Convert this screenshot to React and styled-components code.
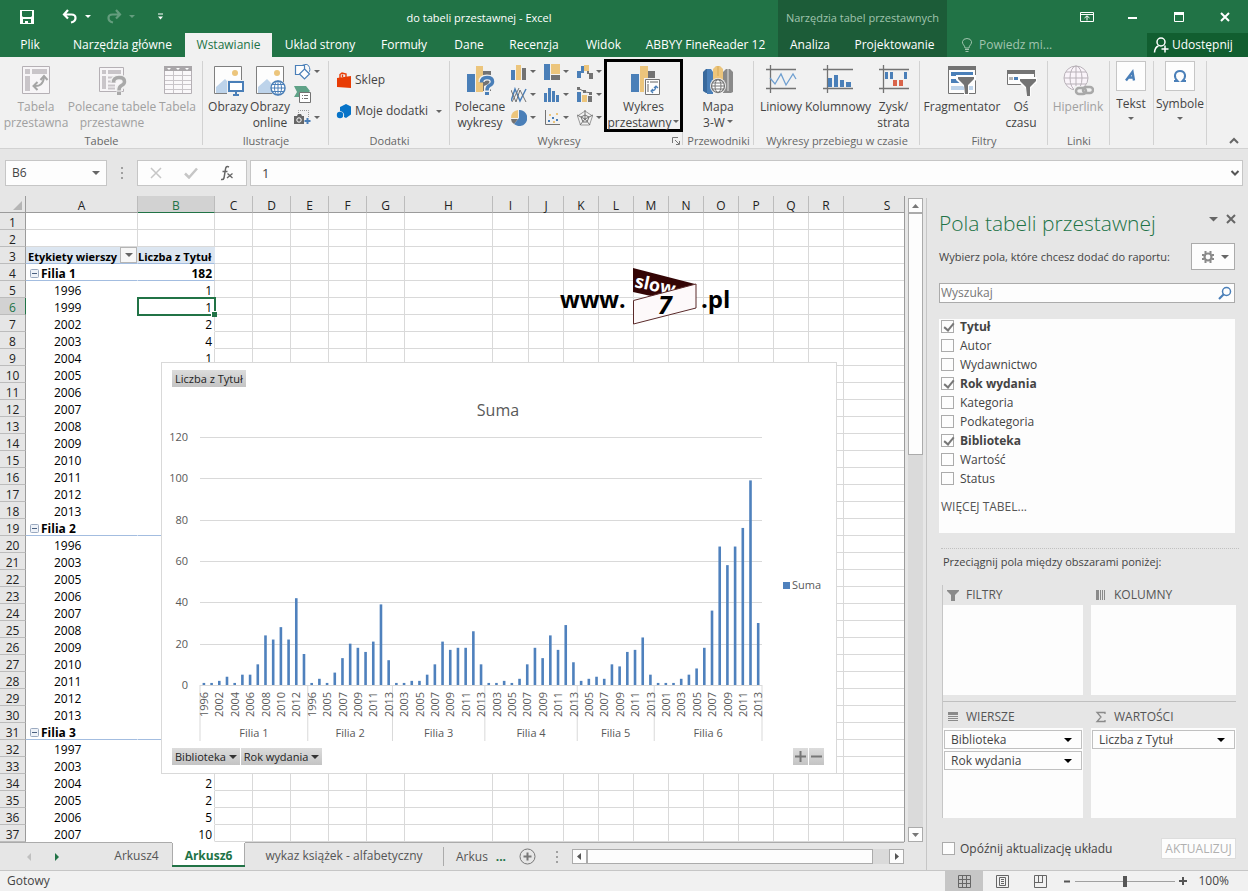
import React, { useState } from "react";
import styled, { createGlobalStyle, css } from "styled-components";

const GlobalStyle = createGlobalStyle`
  * {
    box-sizing: border-box;
  }
  body {
    margin: 0;
    background: #e6e6e6;
    font-family: "Open Sans", "Noto Sans", sans-serif;
    font-size: 12px;
    line-height: 16px;
    color: #444444;
  }
  button, input {
    font: inherit;
    color: inherit;
    margin: 0;
    padding: 0;
    border: 0;
    background: none;
    border-radius: 0;
  }
  svg {
    display: block;
    flex: none;
  }
`;

const Window = styled.div`
  display: flex;
  flex-direction: column;
  min-height: 100vh;
  overflow: hidden;
`;

/* ---------- title bar and tabs ---------- */

const Header = styled.header`
  display: flex;
  background: #217346;
  color: #ffffff;
`;

const HeaderMain = styled.div`
  width: 778px;
`;

const TitleRow = styled.div`
  display: flex;
  align-items: center;
  height: 33px;
`;

const QuickAccess = styled.div`
  display: flex;
  align-items: center;
  width: 180px;
  padding-left: 19px;
`;

const QuickButton = styled.button`
  width: ${(props) => props.$w}px;
  height: 30px;
  opacity: ${(props) => (props.disabled ? 0.3 : 1)};
  color: #ffffff;
`;

const WindowTitle = styled.div`
  flex: 1;
  text-align: center;
  padding-top: 3px;
  font-size: 11px;
`;

const TabRow = styled.nav`
  display: flex;
  height: 24px;
`;

const Tab = styled.button`
  width: ${(props) => props.$w}px;
  height: 24px;
  white-space: nowrap;
  background: ${(props) => (props.$active ? "#f1f1f1" : "transparent")};
  color: ${(props) => (props.$active ? "#217346" : "#ffffff")};
`;

const Context = styled.div`
  width: 169px;
  background: #1c5c38;
`;

const ContextTitle = styled(TitleRow)`
  justify-content: center;
  padding-top: 3px;
  font-size: 11px;
  white-space: nowrap;
  color: #a0c4ae;
`;

const HeaderEnd = styled.div`
  flex: 1;
`;

const WindowButtons = styled(TitleRow)`
  justify-content: flex-end;
`;

const WindowButton = styled.button`
  display: flex;
  align-items: center;
  justify-content: center;
  width: 46px;
  height: 30px;
`;

const TellRow = styled(TabRow)`
  justify-content: space-between;
`;

const Tell = styled.button`
  display: flex;
  align-items: center;
  gap: 6px;
  padding-left: 14px;
  color: #a0c4ae;
`;

const Share = styled.button`
  display: flex;
  align-items: center;
  gap: 3px;
  width: 101px;
  padding-left: 6px;
  background: #115e30;
  color: #ffffff;
`;

/* ---------- ribbon ---------- */

const RibbonBar = styled.div`
  display: flex;
  position: relative;
  height: 92px;
  background: #f1f1f1;
  border-bottom: 1px solid #d2d2d2;
`;

const GroupBox = styled.section`
  display: flex;
  flex-direction: column;
  justify-content: space-between;
  position: relative;
  width: ${(props) => props.$w}px;
  &::after {
    content: "";
    position: absolute;
    right: 0;
    top: 4px;
    bottom: 3px;
    width: 1px;
    background: #d2d2d2;
  }
`;

const GroupBody = styled.div`
  display: flex;
  padding-left: ${(props) => props.$left || 4}px;
`;

const GroupLabel = styled.div`
  height: 14px;
  padding-right: ${(props) => (props.$launcher ? 15 : 0)}px;
  font-size: 11px;
  line-height: 14px;
  text-align: center;
  white-space: nowrap;
  color: #666666;
`;

const BigButton = styled.button`
  display: flex;
  flex: none;
  flex-direction: column;
  align-items: center;
  width: ${(props) => props.$w}px;
  height: 73px;
  margin-top: 2px;
  padding-top: 5px;
  white-space: nowrap;
  position: relative;
  z-index: 1;
  color: #444444;
  svg {
    margin-bottom: 2px;
  }
  ${(props) =>
    props.disabled &&
    css`
      color: #a0a0a0;
    `}
  ${(props) =>
    props.$marked &&
    css`
      border: 3px solid #000000;
      padding-top: 2px;
    `}
`;

const LabelLine = styled.span`
  display: flex;
  align-items: center;
  gap: 2px;
  height: 16px;
  padding-top: 1px;
`;

const TallButton = styled.button`
  display: flex;
  flex-direction: column;
  align-items: center;
  width: ${(props) => props.$w}px;
  margin-top: 4px;
  gap: 5px;
`;

const Tile = styled.span`
  display: flex;
  align-items: center;
  justify-content: center;
  width: 30px;
  height: 30px;
  background: #fdfdfd;
  border: 1px solid #c6c6c6;
`;

const SmallGrid = styled.div`
  display: grid;
  grid-template-columns: ${(props) => (props.$wide ? "33px 33px 27px" : "27px")};
  grid-auto-rows: 23px;
  padding-top: 3px;
  padding-left: 3px;
`;

const SmallButton = styled.button`
  display: flex;
  align-items: center;
  gap: 3px;
`;

const StoreList = styled.div`
  display: flex;
  flex-direction: column;
  gap: 15px;
  width: 106px;
  padding-top: 15px;
`;

const StoreButton = styled.button`
  display: flex;
  align-items: center;
  gap: 3px;
  height: 16px;
  white-space: nowrap;
`;

const Push = styled.span`
  margin-left: auto;
`;

const Launcher = styled.button`
  position: absolute;
  right: 3px;
  bottom: 3px;
`;

const Collapse = styled.button`
  position: absolute;
  right: 9px;
  bottom: 3px;
`;

/* ---------- formula bar ---------- */

const FormulaBar = styled.div`
  display: flex;
  align-items: center;
  padding: 11px 5px 10px;
`;

const Box = styled.div`
  display: flex;
  align-items: center;
  height: 26px;
  background: #fdfdfd;
  border: 1px solid #c6c6c6;
`;

const NameBox = styled(Box)`
  width: 102px;
  padding: 0 6px;
  input {
    width: 80px;
  }
`;

const Dots = styled.div`
  width: 2px;
  height: 12px;
  margin: 0 14px 0 ${(props) => props.$before || 14}px;
  background: repeating-linear-gradient(#a0a0a0 0 2px, transparent 2px 5px);
`;

const FxBox = styled(Box)`
  justify-content: space-between;
  width: 110px;
  padding: 0 12px;
`;

const FormulaBox = styled(Box)`
  flex: 1;
  margin-left: 3px;
  padding: 0 2px 0 11px;
  font-size: 13px;
  input {
    flex: 1;
    min-width: 0;
  }
`;

/* ---------- sheet ---------- */

const Work = styled.main`
  display: flex;
  flex: 1;
`;

const SheetColumn = styled.div`
  display: flex;
  flex-direction: column;
  flex: 1;
  min-width: 0;
`;

const SheetArea = styled.div`
  display: flex;
`;

const Viewport = styled.div`
  position: relative;
  flex: 1;
  min-width: 0;
  overflow: hidden;
  border-right: 1px solid #9b9b9b;
`;

const Grid = styled.table`
  table-layout: fixed;
  width: 931px;
  border-collapse: separate;
  border-spacing: 0;
  background: #ffffff;
  color: #000000;
`;

const ColHead = styled.th`
  height: 17px;
  padding: 3px 0 0;
  font-weight: 400;
  line-height: 13px;
  background: ${(props) => (props.$active ? "#d2d2d2" : "#e6e6e6")};
  color: ${(props) => (props.$active ? "#217346" : "#222222")};
  border-right: 1px solid #bcbcbc;
  border-bottom: 1px solid ${(props) => (props.$active ? "#217346" : "#9b9b9b")};
`;

const RowHead = styled.th`
  height: 17px;
  padding: 3px 0 0;
  font-weight: 400;
  line-height: 13px;
  background: ${(props) => (props.$active ? "#d2d2d2" : "#e6e6e6")};
  color: ${(props) => (props.$active ? "#217346" : "#222222")};
  border-right: 1px solid ${(props) => (props.$active ? "#217346" : "#9b9b9b")};
  border-bottom: 1px solid #bcbcbc;
`;

const Corner = styled(RowHead)`
  border-bottom-color: #9b9b9b;
  svg {
    margin: 0 3px 0 auto;
  }
`;

const Cell = styled.td`
  position: relative;
  height: 17px;
  padding: 3px 0 0;
  line-height: 13px;
  white-space: nowrap;
  border-right: 1px solid #d9d9d9;
  border-bottom: 1px solid #d9d9d9;
`;

const kinds = {
  head: css`
    font-weight: 700;
    font-size: 11px;
    background: #dce6f1;
    border-right-color: #dce6f1;
    border-bottom-color: #a3bde0;
  `,
  total: css`
    font-weight: 700;
    border-bottom-color: #a3bde0;
  `,
  year: css`
    border-bottom-color: transparent;
  `,
};

const LabelCell = styled(Cell)`
  padding-left: ${(props) => (props.$kind === "year" ? 28 : props.$kind === "head" ? 2 : 4)}px;
  ${(props) => kinds[props.$kind]}
  ${(props) => props.$kind && "border-right-color: transparent;"}
`;

const ValueCell = styled(Cell)`
  padding-right: ${(props) => (props.$kind === "head" ? 3 : 2)}px;
  text-align: right;
  ${(props) => kinds[props.$kind]}
  ${(props) =>
    props.$selected &&
    css`
      outline: 2px solid #217346;
      outline-offset: -1px;
    `}
`;

const Inline = styled.span`
  display: flex;
  align-items: center;
  gap: 2px;
`;

const FilterButton = styled.button`
  display: flex;
  align-items: center;
  justify-content: center;
  position: absolute;
  right: 0;
  top: 0;
  width: 17px;
  height: 16px;
  background: #f7f7f7;
  border: 1px solid #b5b5b5;
`;

const FillHandle = styled.span`
  position: absolute;
  right: -3px;
  bottom: -3px;
  width: 6px;
  height: 6px;
  background: #217346;
  border: 1px solid #ffffff;
  border-width: 1px 0 0 1px;
  z-index: 1;
`;

const Watermark = styled.div`
  position: absolute;
  left: 559px;
  top: 70px;
`;

const VScroll = styled.div`
  display: flex;
  flex-direction: column;
  width: 15px;
  margin: 2px 3px 0;
  background: #dadada;
`;

const ScrollButton = styled.button`
  display: flex;
  align-items: center;
  justify-content: center;
  width: 15px;
  height: 15px;
  background: #fdfdfd;
  border: 1px solid #ababab;
`;

const VThumb = styled.div`
  height: 242px;
  background: #fdfdfd;
  border: 1px solid #ababab;
`;

const Spacer = styled.div`
  flex: 1;
`;

/* ---------- pivot chart ---------- */

const ChartBox = styled.figure`
  display: flex;
  flex-direction: column;
  position: absolute;
  left: 161px;
  top: 166px;
  width: 676px;
  margin: 0;
  background: #ffffff;
  border: 1px solid #d9d9d9;
`;

const ChartRow = styled.div`
  display: flex;
  gap: 1px;
  padding: 7px 12px 8px 10px;
`;

const FieldButton = styled.button`
  display: flex;
  align-items: center;
  gap: 3px;
  height: 17px;
  padding: 0 3px;
  font-size: 11px;
  white-space: nowrap;
  color: #222222;
  background: linear-gradient(#dcdcdc, #c4c4c4);
`;

const ZoomButton = styled(FieldButton)`
  justify-content: center;
  width: 15px;
  padding: 0;
`;

/* ---------- sheet tabs ---------- */

const SheetBar = styled.div`
  display: flex;
  align-items: stretch;
  height: 28px;
  padding-right: 22px;
`;

const SheetNav = styled.div`
  display: flex;
  align-items: center;
  gap: 24px;
  width: 101px;
  padding-left: 26px;
  border-top: 1px solid #ababab;
`;

const SheetTab = styled.button`
  width: ${(props) => props.$w}px;
  height: 25px;
  padding-top: 2px;
  white-space: nowrap;
  border-top: 1px solid #ababab;
  ${(props) =>
    props.$active
      ? css`
          padding-top: 4px;
          font-weight: 700;
          color: #217346;
          background: #ffffff;
          border-top-color: #ffffff;
          border-bottom: 2px solid #217346;
          box-shadow: inset 1px 0 #ababab, inset -1px 0 #ababab;
        `
      : css`
          color: #555555;
        `}
`;

const SheetBarLine = styled.div`
  display: flex;
  align-items: center;
  flex: 1;
  border-top: 1px solid #ababab;
`;

const TabDivider = styled.span`
  width: 1px;
  height: 19px;
  background: #ababab;
`;

const CutName = styled.button`
  margin-left: 12px;
  color: #555555;
`;

const MoreTabs = styled.button`
  width: 14px;
  margin: 0 11px 0 6px;
  font-weight: 700;
  color: #217346;
`;

const HScroll = styled.div`
  display: flex;
  flex: 1;
  background: #dadada;
`;

const HThumb = styled.div`
  flex: 1;
  margin-right: 16px;
  background: #fdfdfd;
  border: 1px solid #ababab;
`;

/* ---------- field pane ---------- */

const Pane = styled.aside`
  display: flex;
  flex-direction: column;
  width: 322px;
  margin-top: 2px;
  padding: 11px 12px 0 12px;
  border-left: 1px solid #c6c6c6;
`;

const PaneHead = styled.div`
  display: flex;
  align-items: flex-start;
  gap: 7px;
  height: 34px;
`;

const PaneTitle = styled.h2`
  flex: 1;
  margin: 0;
  font-size: 21px;
  line-height: 28px;
  font-weight: 300;
  white-space: nowrap;
  color: #217346;
`;

const PaneIcon = styled.button`
  margin-top: 5px;
`;

const PaneRow = styled.div`
  display: flex;
  align-items: center;
  justify-content: space-between;
  white-space: nowrap;
`;

const Hint = styled.span`
  font-size: 11px;
`;

const GearButton = styled.button`
  display: flex;
  align-items: center;
  justify-content: space-between;
  width: 44px;
  height: 27px;
  padding: 0 5px 0 9px;
  margin-right: 1px;
  background: #fdfdfd;
  border: 1px solid #ababab;
`;

const SearchBox = styled.label`
  display: flex;
  align-items: center;
  height: 20px;
  margin: 13px 1px 0 0;
  padding: 0 2px 0 1px;
  background: #fdfdfd;
  border: 1px solid #ababab;
  input {
    flex: 1;
    outline: 0;
  }
  input::placeholder {
    color: #777777;
    opacity: 1;
  }
`;

const FieldList = styled.div`
  height: 214px;
  margin: 16px 1px 0 0;
  padding-left: 2px;
  background: #fdfdfd;
`;

const Field = styled.label`
  display: flex;
  align-items: flex-start;
  gap: 6px;
  height: 19px;
  padding-top: 1px;
  line-height: 14px;
  font-weight: ${(props) => (props.$on ? 700 : 400)};
`;

const Check = styled.input.attrs({ type: "checkbox" })`
  appearance: none;
  width: 13px;
  height: 13px;
  background: #fdfdfd;
  border: 1px solid #ababab;
  &:checked::after {
    content: "";
    display: block;
    width: 4px;
    height: 8px;
    margin: 0 0 0 4px;
    border: solid #777777;
    border-width: 0 2px 2px 0;
    transform: rotate(40deg);
  }
`;

const MoreTables = styled.a`
  display: block;
  margin-top: 9px;
  color: #555555;
  text-decoration: none;
`;

const DragHint = styled.div`
  margin: 15px -3px 0 2px;
  padding: 5px 0 0 2px;
  font-size: 11px;
  border-top: 1px dotted #c0c0c0;
`;

const Areas = styled.div`
  display: grid;
  grid-template-columns: 140px 1fr;
  column-gap: 8px;
  margin: 15px 0 0 3px;
  border-left: 1px solid #c6c6c6;
`;

const AreaHead = styled.div`
  display: flex;
  align-items: center;
  gap: 7px;
  height: ${(props) => (props.$low ? 26 : 20)}px;
  padding: ${(props) => (props.$low ? 4 : 0)}px 0 0 4px;
  color: #555555;
`;

const AreaDrop = styled.div`
  height: 90px;
  padding: 2px 1px;
  background: #fdfdfd;
`;

const AreaLine = styled.div`
  grid-column: 1 / -1;
  height: 1px;
  margin-top: 6px;
  background: #c0c0c0;
`;

const Chip = styled.button`
  display: flex;
  align-items: center;
  justify-content: space-between;
  width: 100%;
  height: 19px;
  margin-bottom: 2px;
  padding: 0 9px 0 6px;
  background: #fdfdfd;
  border: 1px solid #c0c0c0;
`;

const PaneFoot = styled(PaneRow)`
  margin: 20px 0 9px 3px;
`;

const Defer = styled.label`
  display: flex;
  align-items: center;
  gap: 5px;
`;

const UpdateButton = styled.button`
  height: 21px;
  width: 75px;
  background: #fdfdfd;
  border: 1px solid #dddddd;
  color: #b0b0b0;
`;

/* ---------- status bar ---------- */

const StatusBar = styled.footer`
  display: flex;
  align-items: center;
  height: 21px;
  padding: 0 19px 0 7px;
  background: #f1f1f1;
  border-top: 1px solid #c6c6c6;
`;

const ViewButton = styled.button`
  display: flex;
  align-items: center;
  justify-content: center;
  width: 38px;
  height: 20px;
  background: ${(props) => (props.$active ? "#c6c6c6" : "transparent")};
`;

const ZoomStep = styled.button`
  display: flex;
  align-items: center;
  justify-content: center;
  width: 16px;
  height: 20px;
`;

const Slider = styled.input.attrs({ type: "range" })`
  appearance: none;
  width: 100px;
  height: 20px;
  background: linear-gradient(#a0a0a0, #a0a0a0) center / 100% 1px no-repeat;
  &::-webkit-slider-thumb {
    appearance: none;
    width: 4px;
    height: 11px;
    background: #555555;
  }
`;

const Percent = styled.span`
  width: 38px;
  text-align: right;
`;

/* ---------- icons ---------- */

const GRAY = "#737373";
const BLUE = "#4a7fb8";
const GOLD = "#ecc57c";

const Caret = ({ color = "#666666", w = 6 }) => (
  <svg width={w} height={w / 2} viewBox="0 0 6 3">
    <path d="M0 0h6L3 3z" fill={color} />
  </svg>
);

const Svg = ({ w = 32, h, children }) => (
  <svg width={w} height={h || w} viewBox={`0 0 ${w} ${h || w}`} fill="none">
    {children}
  </svg>
);

const SaveIcon = () => (
  <Svg w={16}>
    <path d="M1 1h14v14H1z" fill="#fff" />
    <path d="M3 2h10v5l-1 1H4L3 7zM4 10h8v4H4z" fill="#217346" />
    <path d="M6 12h3v2H6z" fill="#fff" />
  </Svg>
);

const UndoIcon = () => (
  <Svg w={16}>
    <path d="M6 1L2 5.500l4 4M2 5.500h7.500q4 0 4 3.500t-4.500 4.500" stroke="#fff" strokeWidth="2.200" />
  </Svg>
);

const RedoIcon = () => (
  <Svg w={16}>
    <path d="M10 1l4 4.500-4 4M14 5.500H6.500q-4 0-4 3.500T7 13.500" stroke="#fff" strokeWidth="2.200" />
  </Svg>
);

const CustomizeIcon = () => (
  <Svg w={7} h={8}>
    <path d="M1 1h5" stroke="#fff" />
    <path d="M1 3.500h5L3.500 6.500z" fill="#fff" />
  </Svg>
);

const DisplayIcon = () => (
  <Svg w={14} h={12}>
    <path d="M.5 1.500h13v9H.5zM1 3.500h12" stroke="#fff" />
    <path d="M7 9.500V5M4.500 7L7 4.800 9.500 7" stroke="#fff" />
  </Svg>
);

const MinimizeIcon = () => (
  <Svg w={10}>
    <path d="M0 6h9" stroke="#fff" strokeWidth="2" />
  </Svg>
);

const MaximizeIcon = () => (
  <Svg w={10}>
    <path d="M.5 1v8.500h9V1" stroke="#fff" />
    <path d="M0 0h10v3H0z" fill="#fff" />
  </Svg>
);

const CloseIcon = ({ color = "#fff" }) => (
  <Svg w={10}>
    <path d="M1 1l8 8M9 1L1 9" stroke={color} strokeWidth="2" />
  </Svg>
);

const BulbIcon = () => (
  <Svg w={12} h={16}>
    <path d="M4 11Q3.800 9 2.500 7.800 1.200 6.200 1.500 4.500 2.200 1.500 6 1.500t4.500 3q.3 1.700-1 3.300Q8.200 9 8 11zM4 12.500h4M4.500 14.500h3" stroke="#a0c4ae" />
  </Svg>
);

const PersonIcon = () => (
  <Svg w={16}>
    <circle cx="8" cy="5" r="4" stroke="#fff" strokeWidth="1.500" />
    <path d="M1.500 15.500q.5-5.500 4-6.500" stroke="#fff" strokeWidth="1.500" />
    <path d="M12 8.500v7M8.500 12h7" stroke="#fff" strokeWidth="1.500" />
  </Svg>
);

const PivotTableIcon = () => (
  <Svg>
    <path d="M2.500 2.500h27v27h-27z" fill="#f7f5f7" stroke="#b5b0b5" />
    <path d="M5 5h5v5H5zM12 5h15v5H12zM5 12h5v15H5z" fill="#c9c5c9" />
    <path d="M14 22q9 1 10-9" stroke="#a5a5a5" strokeWidth="2" />
    <path d="M20.500 16l3.500-4 3.500 4M17.500 18l-4 4 4 4" stroke="#a5a5a5" strokeWidth="2" />
  </Svg>
);

// question mark with a light halo, laid over the lower right of an icon
const QuestionMark = ({ color }) => (
  <>
    <path d="M17.500 18q0-4.500 5.500-4.500t5.500 4-5.500 6.500v3.500" stroke="#f1f1f1" strokeWidth="6" />
    <path d="M17.500 18.500q0-5 5.500-5t5.500 4.200q0 2.300-3 3.800-2.500 1.300-2.500 5" stroke={color} strokeWidth="3.500" />
    <path d="M21 28h4v3h-4z" fill={color} />
  </>
);

const SuggestTableIcon = () => (
  <Svg>
    <path d="M3.500 3.500h24v24h-24z" fill="#f7f5f7" stroke="#b5b0b5" />
    <path d="M6 6h4v4H6zM12 6h13v4H12zM6 12h4v13H6z" fill="#c9c5c9" />
    <path d="M12 13.500h10M12 17.500h8M12 21.500h7M12 24.500h7" stroke="#c9c5c9" strokeWidth="2" />
    <QuestionMark color="#a9a9a9" />
  </Svg>
);

const TableIcon = () => (
  <Svg>
    <path d="M2.500 2.500h27v27h-27z" fill="#faf8fa" stroke="#b5b0b5" />
    <path d="M2 2h28v5H2z" fill="#a9a6a9" />
    <path d="M5 4h4L7 6zM14 4h4l-2 2zM23 4h4l-2 2z" fill="#fff" />
    <path d="M11.500 7v22M20.500 7v22M3 11.500h26M3 16.500h26M3 20.500h26M3 25.500h26" stroke="#c9c5c9" />
  </Svg>
);

const Picture = () => (
  <>
    <path d="M2.500 2.500h27v27h-27z" fill="#fdfdfd" stroke="#7f7f7f" />
    <circle cx="23" cy="9" r="3" fill="#ecc57c" />
    <path d="M4 29V23l9-8 9 9v5z" fill="#bdd3ea" />
  </>
);

const PictureIcon = () => (
  <Svg>
    <Picture />
    <path d="M15 16h17v15H15z" fill="#f1f1f1" />
    <path d="M17 18h14v9H17z" fill="#fff" stroke={BLUE} strokeWidth="2" />
    <path d="M23 27h2v3h-2zM21 30h6v2h-6z" fill={BLUE} />
  </Svg>
);

const OnlinePictureIcon = () => (
  <Svg>
    <Picture />
    <circle cx="24" cy="24" r="8" fill="#f1f1f1" />
    <circle cx="24" cy="24" r="7" fill="#fff" stroke={BLUE} strokeWidth="1.500" />
    <ellipse cx="24" cy="24" rx="3.500" ry="7" stroke={BLUE} />
    <path d="M24 17v14M17 24h14M18 20.500h12M18 27.500h12" stroke={BLUE} />
  </Svg>
);

const ShapesIcon = () => (
  <Svg w={17}>
    <path d="M8 2.500q6-3 7.500 2t-3 6" stroke={BLUE} fill="#f7f7f7" />
    <path d="M1.500 2.500h9v9h-9z" fill="#fdfdfd" stroke={BLUE} strokeWidth="1.200" />
    <path d="M10.500 6l5 5-5 5-5-5z" fill="#fdfdfd" stroke={BLUE} strokeWidth="1.200" />
  </Svg>
);

const SmartArtIcon = () => (
  <Svg w={17}>
    <path d="M0 0h12l4 5-2 2H6v4H0l3-5z" fill="#5fa287" />
    <path d="M5.500 6.500h11v10h-11z" fill="#fff" stroke={GRAY} />
    <path d="M8 9.500h1M10 9.500h4M8 12.500h1M10 12.500h4" stroke={GRAY} />
  </Svg>
);

const ScreenshotIcon = () => (
  <Svg w={17}>
    <path d="M4.500 6V1.500h10v7" stroke="#999" strokeDasharray="1 1" />
    <path d="M0 7h3l1-2h3l1 2h2v8H0z" fill="#666" />
    <circle cx="5" cy="11" r="2.200" fill="#666" stroke="#fff" />
    <path d="M13.500 9v6M10.500 12h6" stroke={BLUE} strokeWidth="2" />
  </Svg>
);

const StoreIcon = () => (
  <Svg w={16}>
    <path d="M1 6l14-2v12L1 15z" fill="#e83c05" />
    <path d="M4 6V2.500L6 1l4 1v3M6.500 5V2.500" stroke="#e83c05" strokeWidth="1.400" />
  </Svg>
);

const AddinsIcon = () => (
  <Svg w={16}>
    <path d="M4 4l6-3 5 2.500v8L10 15l-2-1q1-5-4-6z" fill="#0673c8" />
    <circle cx="4" cy="12" r="3.200" fill="#0673c8" />
  </Svg>
);

const SuggestChartIcon = () => (
  <Svg>
    <path d="M3 10h8v18H3z" fill={BLUE} />
    <path d="M12 2h7v26h-7z" fill={GOLD} />
    <path d="M19 7h8v20h-8z" fill={GRAY} />
    <QuestionMark color={BLUE} />
  </Svg>
);

const PivotChartIcon = () => (
  <Svg>
    <path d="M3 10h8v18H3z" fill={BLUE} />
    <path d="M12 2h8v26h-8z" fill={GOLD} />
    <path d="M20 7h7v10h-7z" fill={GRAY} />
    <path d="M16 14h17v18H16z" fill="#f1f1f1" />
    <path d="M17.500 15.500h14v15h-14z" fill="#fdfdfd" stroke={GRAY} />
    <path d="M19 17h2v2h-2zM22 17h8v2h-8zM19 20h2v8h-2z" fill="#b0b0b0" />
    <path d="M23 27q5 0 5-5M26 24l2-2 2 2M25 25l-2 2 2 2" stroke={BLUE} strokeWidth="1.200" />
  </Svg>
);

const MapIcon = () => (
  <Svg>
    <path d="M1 8l3-3h2v24H4l-3-2z" fill="#39699c" />
    <path d="M5 5h4l2 3v22H5z" fill={BLUE} />
    <path d="M11 5l3-3h4l3 3v23H11z" fill={GOLD} />
    <path d="M16 2v10" stroke="#d4a755" />
    <path d="M21 8l3-3h4l3 3v20l-2 1h-8z" fill="#8a8a8a" />
    <path d="M26 5v22" stroke="#b5b5b5" strokeWidth="2" />
    <circle cx="16" cy="22" r="8" fill="#f1f1f1" />
    <circle cx="16" cy="22" r="6.500" fill="#fff" stroke="#777" strokeWidth="1.300" />
    <ellipse cx="16" cy="22" rx="3" ry="6.500" stroke="#777" />
    <path d="M9.500 22h13M10.500 19h11M10.500 25h11" stroke="#777" />
  </Svg>
);

const SparkAxes = () => (
  <path d="M5.500 1v28M1 5.500h30M1 24.500h30" stroke={GRAY} strokeWidth="1.300" />
);

const SparkLineIcon = () => (
  <Svg>
    <SparkAxes />
    <path d="M5 14l5 6 6-10 5 11 7-11 3 5" stroke="#6f9fd0" strokeWidth="1.300" />
  </Svg>
);

const SparkColumnIcon = () => (
  <Svg>
    <SparkAxes />
    <path d="M6 14h4v9H6zM12 11h4v12h-4zM18 16h4v7h-4zM24 18h5v5h-5z" fill={BLUE} />
  </Svg>
);

const WinLossIcon = () => (
  <Svg>
    <SparkAxes />
    <path d="M7 8h3v7H7zM12 8h3v7h-3zM26 8h3v7h-3z" fill={BLUE} />
    <path d="M15 16h4v6h-4zM21 16h4v6h-4z" fill="#d9644a" />
  </Svg>
);

const Funnel = ({ x, y }) => (
  <g transform={`translate(${x} ${y})`}>
    <path d="M-1-1h20v5l-7 6v9H7v-8l-8-7z" fill="#fdfdfd" />
    <path d="M1 1h16v2l-6 6v9H8l-1-9L1 3z" fill={GRAY} />
  </g>
);

const SlicerIcon = () => (
  <Svg>
    <path d="M2.500 3.500h27v26h-27z" fill="#fdfdfd" stroke={GRAY} />
    <path d="M2 2h28v4H2z" fill={GRAY} />
    <path d="M5 8h22v4H5zM5 15h10v4H5z" fill={BLUE} />
    <path d="M5 22h22v4H5z" fill="#bdd3ea" />
    <Funnel x="11" y="12" />
  </Svg>
);

const TimelineIcon = () => (
  <Svg>
    <path d="M2.500 6.500h27v14h-27z" fill="#fdfdfd" stroke={GRAY} />
    <path d="M2 6h28v4H2z" fill={GRAY} />
    <path d="M4 13h4v3H4zM20 13h3v3h-3zM24 13h3v3h-3z" fill="#b5b5b5" />
    <path d="M9 13h4v3H9zM14 13h5v3h-5z" fill={BLUE} />
    <Funnel x="14" y="14" />
  </Svg>
);

const LinkIcon = () => (
  <Svg>
    <g stroke="#b9b2b9">
      <circle cx="14" cy="14" r="12" fill="#faf4fa" />
      <ellipse cx="14" cy="14" rx="6" ry="12" />
      <path d="M14 2v24M2 14h24M4 8h20M4 20h20" />
    </g>
    <path d="M12 22h21v9H12z" fill="#f1f1f1" />
    <rect x="14" y="24" width="10" height="6" rx="3" stroke="#a9a9a9" strokeWidth="2.500" />
    <rect x="21" y="23" width="10" height="6" rx="3" stroke="#a9a9a9" strokeWidth="2.500" />
  </Svg>
);

const smallCharts = [
  <>
    <path d="M0 6h4v10H0z" fill={BLUE} />
    <path d="M5 1h5v15H5z" fill={GOLD} />
    <path d="M11 4h4v12h-4z" fill={GRAY} />
  </>,
  <>
    <path d="M0 0h6v16H0z" fill={BLUE} />
    <path d="M7 0h9v10H7z" fill={GOLD} />
    <path d="M7 11h9v5H7z" fill={GRAY} />
  </>,
  <>
    <path d="M0 7h4v7H0zM4 2h3v7H4z" fill={BLUE} />
    <path d="M7 1h5v6H7z" fill={GOLD} />
    <path d="M10 7h2v3h-2zM12 9h4v6h-4z" fill={GRAY} />
  </>,
  <>
    <path d="M0 14L4 2l5 12 6-12" stroke={BLUE} strokeWidth="1.500" />
    <path d="M0 3l5 12L9 3l6 12M1 15L8 1" stroke={GRAY} />
  </>,
  <path d="M0 6h3v9H0zM4 1h3v14H4zM8 4h3v11H8zM12 8h3v7h-3z" fill={BLUE} />,
  <>
    <path d="M0 5h4v10H0z" fill={BLUE} />
    <path d="M5 8h5v7H5z" fill={GOLD} />
    <path d="M11 9h4v6h-4z" fill={GRAY} />
    <path d="M1 1l7 4 7 1" stroke={GRAY} />
    <path d="M0 0h3v3H0zM6 3h3v3H6zM12 5h3v3h-3z" fill={GRAY} />
  </>,
  <>
    <path d="M8 0a8 8 0 1 1-5 14l5-6z" fill={BLUE} />
    <path d="M7 0v8L0 8q0-7 7-8z" fill={GOLD} />
    <path d="M0 9h7l-4 5q-3-2-3-5z" fill={GRAY} />
  </>,
  <>
    <path d="M1.500 0v14.500H16" stroke={GRAY} />
    <path d="M4 10h2v2H4zM8 7h2v2H8zM12 9h2v2h-2z" fill={BLUE} />
    <path d="M5 4h2v2H5zM9 11h2v2H9zM12 3h2v2h-2z" fill={GOLD} />
  </>,
  <>
    <path d="M8 1l7.500 5-3 9h-9L.5 6z" stroke="#999" />
    <path d="M8 5l4 2-2 5H6L4 7z" stroke={GRAY} />
    <path d="M8 0v9M16 5L8 9 0 5M3 15l5-6 5 6" stroke={GRAY} />
  </>,
];

const GearIcon = () => (
  <Svg w={14}>
    <circle cx="7" cy="7" r="3.500" stroke="#8a8a8a" strokeWidth="2.200" />
    <path d="M4.500 1v3M9.500 1v3M4.500 10v3M9.500 10v3M1 5h2.500M1 9h2.500M10.500 5H13M10.500 9H13" stroke="#8a8a8a" strokeWidth="2" />
  </Svg>
);

const SearchIcon = () => (
  <Svg w={14}>
    <circle cx="8.500" cy="5.500" r="4" stroke={BLUE} strokeWidth="1.500" />
    <path d="M6 8l-5 5" stroke={BLUE} strokeWidth="2.200" />
  </Svg>
);

const areaIcons = {
  filter: <path d="M0 1h12v1L8 6v6H4V6L0 2z" fill="#8a8a8a" />,
  columns: (
    <>
      <path d="M1 1h3v10H1z" fill="#8a8a8a" />
      <path d="M5.500 1v10M7.500 1v10M9.500 1v10" stroke="#8a8a8a" />
    </>
  ),
  rows: (
    <>
      <path d="M1 1h10v3H1z" fill="#8a8a8a" />
      <path d="M1 5.500h10M1 7.500h10M1 9.500h10" stroke="#8a8a8a" />
    </>
  ),
  sum: <path d="M10 3V1.500H2L6 6l-4 4.500h8V9" stroke="#8a8a8a" strokeWidth="1.300" />,
};

const Logo = () => (
  <svg width="172" height="62" viewBox="0 0 172 62">
    <g fontFamily="Open Sans, Noto Sans, sans-serif" fontWeight="700">
      <text x="1" y="42" fontSize="23" fill="#000">www.</text>
      <path d="M74 2l62 16-26 11-18 1-18-4z" fill="#330505" />
      <text x="75" y="21" fontSize="18" fill="#fff" transform="rotate(12 75 21)">slow</text>
      <path d="M74.500 34.500L137 18v24L74.500 58z" fill="#fdf9fa" stroke="#5a2a2a" />
      <text x="99" y="48" fontSize="25" fontStyle="italic" fill="#000">7</text>
      <text x="142" y="42" fontSize="24" fill="#000">.pl</text>
    </g>
  </svg>
);

/* ---------- data ---------- */

const tabs = [
  ["Plik", 60],
  ["Narzędzia główne", 125],
  ["Wstawianie", 87],
  ["Układ strony", 96],
  ["Formuły", 72],
  ["Dane", 58],
  ["Recenzja", 72],
  ["Widok", 67],
  ["ABBYY FineReader 12", 137],
];

const columns = [
  ["A", 112], ["B", 77], ["C", 38], ["D", 38], ["E", 38], ["F", 38], ["G", 38],
  ["H", 88], ["I", 36], ["J", 35], ["K", 35], ["L", 35], ["M", 35], ["N", 35],
  ["O", 35], ["P", 35], ["Q", 35], ["R", 35], ["S", 87],
];

const years = (list, values = []) =>
  list.map((label, i) => ({ kind: "year", label, value: values[i] }));

const rows = [
  {},
  {},
  { kind: "head", label: "Etykiety wierszy", value: "Liczba z Tytuł" },
  { kind: "total", label: "Filia 1", value: 182 },
  ...years(
    [1996, 1999, 2002, 2003, 2004, 2005, 2006, 2007, 2008, 2009, 2010, 2011, 2012, 2013],
    [1, 1, 2, 4, 1]
  ),
  { kind: "total", label: "Filia 2" },
  ...years([1996, 2003, 2005, 2006, 2007, 2008, 2009, 2010, 2011, 2012, 2013]),
  { kind: "total", label: "Filia 3" },
  ...years([1997, 2003, 2004, 2005, 2006, 2007], [, , 2, 2, 5, 10]),
];

const series = [
  { name: "Filia 1", values: [1, 1, 2, 4, 1, 5, 5, 10, 24, 22, 28, 22, 42, 15] },
  { name: "Filia 2", values: [1, 3, 1, 6, 13, 20, 18, 16, 21, 39, 12] },
  { name: "Filia 3", values: [1, 1, 2, 2, 5, 10, 21, 17, 18, 18, 26, 10] },
  { name: "Filia 4", values: [1, 1, 2, 1, 3, 10, 18, 13, 24, 17, 29, 11] },
  { name: "Filia 5", values: [2, 3, 4, 3, 10, 9, 16, 17, 23, 5] },
  { name: "Filia 6", values: [1, 1, 1, 3, 5, 8, 18, 36, 67, 58, 67, 76, 99, 30] },
];

// every second category gets a label
const ticks = [
  1996, 2002, 2004, 2006, 2008, 2010, 2012,
  1996, 2005, 2007, 2009, 2011, 2013,
  2003, 2005, 2007, 2009, 2011, 2013,
  2003, 2005, 2007, 2009, 2011, 2013,
  2005, 2007, 2009, 2011, 2013,
  2001, 2003, 2005, 2007, 2009, 2011, 2013,
];

const fields = [
  ["Tytuł", true],
  ["Autor", false],
  ["Wydawnictwo", false],
  ["Rok wydania", true],
  ["Kategoria", false],
  ["Podkategoria", false],
  ["Biblioteka", true],
  ["Wartość", false],
  ["Status", false],
];

/* ---------- parts ---------- */

const Group = ({ w, label, left, launcher, children }) => (
  <GroupBox $w={w}>
    <GroupBody $left={left}>{children}</GroupBody>
    {label && <GroupLabel $launcher={launcher}>{label}</GroupLabel>}
    {launcher && (
      <Launcher aria-label="Opcje grupy">
        <Svg w={8}>
          <path d="M.5 6V.5H6M3 3l4 4M7.500 4v3.500H4" stroke="#777" />
        </Svg>
      </Launcher>
    )}
  </GroupBox>
);

const Big = ({ w, icon, lines, caret, marked, disabled }) => (
  <BigButton $w={w} $marked={marked} disabled={disabled}>
    {icon}
    {lines.map((line, i) => (
      <LabelLine key={line}>
        {line}
        {caret && i === lines.length - 1 && <Caret />}
      </LabelLine>
    ))}
  </BigButton>
);

const Ribbon = () => (
  <RibbonBar>
    <Group w={203} label="Tabele">
      <Big w={64} icon={<PivotTableIcon />} lines={["Tabela", "przestawna"]} disabled />
      <Big w={88} icon={<SuggestTableIcon />} lines={["Polecane tabele", "przestawne"]} disabled />
      <Big w={43} icon={<TableIcon />} lines={["Tabela"]} disabled />
    </Group>
    <Group w={126} label="Ilustracje">
      <Big w={42} icon={<PictureIcon />} lines={["Obrazy"]} />
      <Big w={42} icon={<OnlinePictureIcon />} lines={["Obrazy", "online"]} />
      <SmallGrid>
        <SmallButton aria-label="Kształty"><ShapesIcon /><Caret /></SmallButton>
        <SmallButton aria-label="SmartArt"><SmartArtIcon /></SmallButton>
        <SmallButton aria-label="Zrzut ekranu"><ScreenshotIcon /><Caret /></SmallButton>
      </SmallGrid>
    </Group>
    <Group w={121} label="Dodatki" left={7}>
      <StoreList>
        <StoreButton><StoreIcon />Sklep</StoreButton>
        <StoreButton><AddinsIcon />Moje dodatki<Push><Caret /></Push></StoreButton>
      </StoreList>
    </Group>
    <Group w={233} label="Wykresy" left={2} launcher>
      <Big w={56} icon={<SuggestChartIcon />} lines={["Polecane", "wykresy"]} />
      <SmallGrid $wide>
        {smallCharts.map((icon, i) => (
          <SmallButton key={i} aria-label={`Wykres ${i + 1}`}>
            <Svg w={16}>{icon}</Svg>
            <Caret />
          </SmallButton>
        ))}
      </SmallGrid>
      <Big w={79} icon={<PivotChartIcon />} lines={["Wykres", "przestawny"]} caret marked />
    </Group>
    <Group w={71} label="Przewodniki">
      <Big w={62} icon={<MapIcon />} lines={["Mapa", "3-W"]} caret />
    </Group>
    <Group w={166} label="Wykresy przebiegu w czasie">
      <Big w={46} icon={<SparkLineIcon />} lines={["Liniowy"]} />
      <Big w={68} icon={<SparkColumnIcon />} lines={["Kolumnowy"]} />
      <Big w={43} icon={<WinLossIcon />} lines={["Zysk/", "strata"]} />
    </Group>
    <Group w={128} label="Filtry">
      <Big w={76} icon={<SlicerIcon />} lines={["Fragmentator"]} />
      <Big w={42} icon={<TimelineIcon />} lines={["Oś", "czasu"]} />
    </Group>
    <Group w={62} label="Linki">
      <Big w={52} icon={<LinkIcon />} lines={["Hiperlink"]} disabled />
    </Group>
    <Group w={44} left={1}>
      <TallButton $w={40}>
        <Tile>
          <Svg w={14}>
            <path d="M2 11.500L8.500 3l1.500 8.500M5 8.500h5" stroke={BLUE} strokeWidth="2.400" />
          </Svg>
        </Tile>
        Tekst
        <Caret />
      </TallButton>
    </Group>
    <Group w={53} left={2}>
      <TallButton $w={48}>
        <Tile>
          <Svg w={14}>
            <path d="M1 12h3.500q-3-3-2.500-6 .8-4 5-4t5 4q.5 3-2.500 6H13" stroke={BLUE} strokeWidth="2" />
          </Svg>
        </Tile>
        Symbole
        <Caret />
      </TallButton>
    </Group>
    <Collapse aria-label="Zwiń wstążkę">
      <Svg w={10} h={8}>
        <path d="M1 6l4-4 4 4" stroke="#666" strokeWidth="2" />
      </Svg>
    </Collapse>
  </RibbonBar>
);

const Chart = () => {
  const left = 38;
  const zero = 298;
  const step = 562 / 73;
  const unit = 248 / 120;
  const x = (i) => left + step * i;
  let index = 0;

  return (
    <ChartBox>
      <ChartRow>
        <FieldButton>Liczba z Tytuł</FieldButton>
      </ChartRow>
      <svg width="674" height="346" viewBox="0 8 674 346" fontFamily="Open Sans, Noto Sans, sans-serif" fontSize="11" fill="#595959">
        <text x="336" y="29" fontSize="16" textAnchor="middle">Suma</text>
        {[0, 20, 40, 60, 80, 100, 120].map((n) => (
          <g key={n}>
            <line x1={left} x2={left + 562} y1={Math.round(zero - n * unit) + 0.5} y2={Math.round(zero - n * unit) + 0.5} stroke="#d9d9d9" />
            <text x="26" y={Math.round(zero - n * unit) + 4} textAnchor="end">{n}</text>
          </g>
        ))}
        {series.map(({ name, values }) => {
          const start = index;
          index += values.length;
          return (
            <g key={name}>
              <line x1={x(start)} x2={x(start)} y1={zero} y2={zero + 57} stroke="#d9d9d9" />
              {values.map((v, i) => (
                <rect key={i} x={x(start + i) + 2.600} y={zero - v * unit} width="2.600" height={v * unit} fill="#4f81bd" />
              ))}
              <text x={(x(start) + x(index)) / 2} y={zero + 52} textAnchor="middle">{name}</text>
            </g>
          );
        })}
        <line x1={left + 562} x2={left + 562} y1={zero} y2={zero + 57} stroke="#d9d9d9" />
        {ticks.map((t, i) => (
          <text key={i} transform={`translate(${x(i * 2) + 8} ${zero + 32}) rotate(-90)`}>{t}</text>
        ))}
        <rect x="621" y="195" width="7" height="7" fill="#4f81bd" />
        <text x="630" y="202">Suma</text>
      </svg>
      <ChartRow>
        <FieldButton>Biblioteka<Caret w={8} color="#333" /></FieldButton>
        <FieldButton>Rok wydania<Caret w={8} color="#333" /></FieldButton>
        <Spacer />
        <ZoomButton aria-label="Rozwiń">
          <Svg w={11}><path d="M0 5.500h11M5.500 0v11" stroke="#777" strokeWidth="2" /></Svg>
        </ZoomButton>
        <ZoomButton aria-label="Zwiń">
          <Svg w={11}><path d="M0 5.500h11" stroke="#777" strokeWidth="2" /></Svg>
        </ZoomButton>
      </ChartRow>
    </ChartBox>
  );
};

const Sheet = () => (
  <Grid>
    <colgroup>
      <col width={26} />
      {columns.map(([name, w]) => (
        <col key={name} width={w} />
      ))}
    </colgroup>
    <thead>
      <tr>
        <Corner>
          <Svg w={9}><path d="M9 0v9H0z" fill="#b5b5b5" /></Svg>
        </Corner>
        {columns.map(([name]) => (
          <ColHead key={name} $active={name === "B"}>{name}</ColHead>
        ))}
      </tr>
    </thead>
    <tbody>
      {rows.map(({ kind, label, value }, r) => (
        <tr key={r}>
          <RowHead $active={r === 5}>{r + 1}</RowHead>
          <LabelCell $kind={kind}>
            {kind === "total" ? (
              <Inline>
                <Svg w={9}>
                  <rect x=".5" y=".5" width="8" height="8" rx="1" fill="#eef2f8" stroke="#9aa9bf" />
                  <path d="M2 4.500h5" stroke="#4a6080" />
                </Svg>
                {label}
              </Inline>
            ) : (
              label
            )}
            {kind === "head" && (
              <FilterButton aria-label="Filtruj etykiety"><Caret w={8} /></FilterButton>
            )}
          </LabelCell>
          <ValueCell $kind={kind} $selected={r === 5}>
            {value}
            {r === 5 && <FillHandle />}
          </ValueCell>
          {columns.slice(2).map(([name]) => (
            <Cell key={name} />
          ))}
        </tr>
      ))}
    </tbody>
  </Grid>
);

const Area = ({ icon, title, low, items = [] }) => (
  <div>
    <AreaHead $low={low}>
      <Svg w={12}>{areaIcons[icon]}</Svg>
      {title}
    </AreaHead>
    <AreaDrop>
      {items.map((item) => (
        <Chip key={item}>{item}<Caret w={8} color="#000" /></Chip>
      ))}
    </AreaDrop>
  </div>
);

const FieldPane = () => {
  const [checked, setChecked] = useState(Object.fromEntries(fields));
  const toggle = (name) => setChecked({ ...checked, [name]: !checked[name] });

  return (
    <Pane>
      <PaneHead>
        <PaneTitle>Pola tabeli przestawnej</PaneTitle>
        <PaneIcon aria-label="Opcje okienka"><Svg w={10}><path d="M0 3h9L4.500 7.500z" fill="#666" /></Svg></PaneIcon>
        <PaneIcon aria-label="Zamknij"><CloseIcon color="#666" /></PaneIcon>
      </PaneHead>
      <PaneRow>
        <Hint>Wybierz pola, które chcesz dodać do raportu:</Hint>
        <GearButton aria-label="Narzędzia"><GearIcon /><Caret w={8} /></GearButton>
      </PaneRow>
      <SearchBox>
        <input type="text" placeholder="Wyszukaj" aria-label="Wyszukaj" />
        <SearchIcon />
      </SearchBox>
      <FieldList>
        {fields.map(([name]) => (
          <Field key={name} $on={checked[name]}>
            <Check checked={checked[name]} onChange={() => toggle(name)} />
            {name}
          </Field>
        ))}
        <MoreTables href="#tabele">WIĘCEJ TABEL...</MoreTables>
      </FieldList>
      <DragHint>Przeciągnij pola między obszarami poniżej:</DragHint>
      <Areas>
        <Area icon="filter" title="FILTRY" />
        <Area icon="columns" title="KOLUMNY" />
        <AreaLine />
        <Area icon="rows" title="WIERSZE" low items={["Biblioteka", "Rok wydania"]} />
        <Area icon="sum" title="WARTOŚCI" low items={["Liczba z Tytuł"]} />
      </Areas>
      <PaneFoot>
        <Defer><Check />Opóźnij aktualizację układu</Defer>
        <UpdateButton disabled>AKTUALIZUJ</UpdateButton>
      </PaneFoot>
    </Pane>
  );
};

const App = () => {
  const [zoom, setZoom] = useState(100);

  return (
    <Window>
      <GlobalStyle />
      <Header>
        <HeaderMain>
          <TitleRow>
            <QuickAccess>
              <QuickButton $w={43} aria-label="Zapisz"><SaveIcon /></QuickButton>
              <QuickButton $w={23} aria-label="Cofnij"><UndoIcon /></QuickButton>
              <QuickButton $w={21} aria-label="Lista cofania"><Caret color="#fff" /></QuickButton>
              <QuickButton $w={23} aria-label="Ponów" disabled><RedoIcon /></QuickButton>
              <QuickButton $w={28} aria-label="Lista ponawiania" disabled><Caret color="#fff" /></QuickButton>
              <QuickButton $w={10} aria-label="Dostosuj"><CustomizeIcon /></QuickButton>
            </QuickAccess>
            <WindowTitle>do tabeli przestawnej - Excel</WindowTitle>
          </TitleRow>
          <TabRow>
            {tabs.map(([name, w]) => (
              <Tab key={name} $w={w} $active={name === "Wstawianie"}>{name}</Tab>
            ))}
          </TabRow>
        </HeaderMain>
        <Context>
          <ContextTitle>Narzędzia tabel przestawnych</ContextTitle>
          <TabRow>
            <Tab $w={64}>Analiza</Tab>
            <Tab $w={105}>Projektowanie</Tab>
          </TabRow>
        </Context>
        <HeaderEnd>
          <WindowButtons>
            <WindowButton aria-label="Opcje wstążki"><DisplayIcon /></WindowButton>
            <WindowButton aria-label="Minimalizuj"><MinimizeIcon /></WindowButton>
            <WindowButton aria-label="Maksymalizuj"><MaximizeIcon /></WindowButton>
            <WindowButton aria-label="Zamknij"><CloseIcon /></WindowButton>
          </WindowButtons>
          <TellRow>
            <Tell><BulbIcon />Powiedz mi...</Tell>
            <Share><PersonIcon />Udostępnij</Share>
          </TellRow>
        </HeaderEnd>
      </Header>
      <Ribbon />
      <FormulaBar>
        <NameBox>
          <input type="text" defaultValue="B6" aria-label="Pole nazwy" />
          <Caret w={8} />
        </NameBox>
        <Dots />
        <FxBox>
          <Svg w={12}><path d="M1 1l10 10M11 1L1 11" stroke="#c6c6c6" strokeWidth="1.500" /></Svg>
          <Svg w={14} h={12}><path d="M1 6.500l4 4L13 1.500" stroke="#c6c6c6" strokeWidth="2.500" /></Svg>
          <Svg w={14} h={16}>
            <path d="M9 2q-3-1.500-3.500 2L4 13q-.5 2-3 1.500M2.500 6.500h5" stroke="#666" strokeWidth="1.500" />
            <path d="M7.500 8.500l5 4.500M12.500 8.500L7 13" stroke="#666" strokeWidth="1.300" />
          </Svg>
        </FxBox>
        <FormulaBox>
          <input type="text" defaultValue="1" aria-label="Pasek formuły" />
          <Svg w={10} h={8}><path d="M1.500 2L5 5.500 8.500 2" stroke="#555" strokeWidth="2" /></Svg>
        </FormulaBox>
      </FormulaBar>
      <Work>
        <SheetColumn>
          <SheetArea>
            <Viewport>
              <Sheet />
              <Watermark><Logo /></Watermark>
              <Chart />
            </Viewport>
            <VScroll>
              <ScrollButton aria-label="W górę"><Svg w={7} h={4}><path d="M0 4h7L3.500 0z" fill="#777" /></Svg></ScrollButton>
              <VThumb />
              <Spacer />
              <ScrollButton aria-label="W dół"><Svg w={7} h={4}><path d="M0 0h7L3.500 4z" fill="#777" /></Svg></ScrollButton>
            </VScroll>
          </SheetArea>
          <SheetBar>
            <SheetNav>
              <Svg w={5} h={8}><path d="M5 0v8L1 4z" fill="#c0c0c0" /></Svg>
              <Svg w={5} h={8}><path d="M0 0v8l4-4z" fill="#217346" /></Svg>
            </SheetNav>
            <SheetTab $w={71}>Arkusz4</SheetTab>
            <SheetTab $w={73} $active>Arkusz6</SheetTab>
            <SheetTab $w={198}>wykaz książek - alfabetyczny</SheetTab>
            <SheetBarLine>
              <TabDivider />
              <CutName>Arkus</CutName>
              <MoreTabs>...</MoreTabs>
              <button aria-label="Nowy arkusz">
                <Svg w={17}>
                  <circle cx="8.500" cy="8.500" r="7.500" stroke="#777" />
                  <path d="M8.500 4.500v8M4.500 8.500h8" stroke="#777" strokeWidth="2" />
                </Svg>
              </button>
              <Dots $before={20} />
              <HScroll>
                <ScrollButton aria-label="W lewo"><Svg w={4} h={7}><path d="M4 0v7L0 3.500z" fill="#555" /></Svg></ScrollButton>
                <HThumb />
                <ScrollButton aria-label="W prawo"><Svg w={4} h={7}><path d="M0 0v7l4-3.500z" fill="#555" /></Svg></ScrollButton>
              </HScroll>
            </SheetBarLine>
          </SheetBar>
        </SheetColumn>
        <FieldPane />
      </Work>
      <StatusBar>
        Gotowy
        <Spacer />
        <ViewButton $active aria-label="Normalny">
          <Svg w={13}><path d="M.5.5h12v12H.5zM4.500 0v13M8.500 0v13M0 4.500h13M0 8.500h13" stroke="#666" /></Svg>
        </ViewButton>
        <ViewButton aria-label="Układ strony">
          <Svg w={13}><path d="M.5.5h12v12H.5zM3.500 2.500h6v8h-6zM5 4.500h3M5 6.500h3M5 8.500h3" stroke="#666" /></Svg>
        </ViewButton>
        <ViewButton aria-label="Podgląd podziału stron">
          <Svg w={13}><path d="M.5.5h12v12H.5zM4.500 0v7.500M8.500 0v7.500M0 7.500h9" stroke="#666" /></Svg>
        </ViewButton>
        <ZoomStep aria-label="Pomniejsz"><Svg w={7}><path d="M0 3.500h6" stroke="#555" strokeWidth="2" /></Svg></ZoomStep>
        <Slider min={0} max={200} value={zoom} onChange={(e) => setZoom(Number(e.target.value))} aria-label="Powiększenie" />
        <ZoomStep aria-label="Powiększ"><Svg w={8}><path d="M0 4h8M4 0v8" stroke="#555" strokeWidth="2" /></Svg></ZoomStep>
        <Percent>{zoom}%</Percent>
      </StatusBar>
    </Window>
  );
};

export default App;
